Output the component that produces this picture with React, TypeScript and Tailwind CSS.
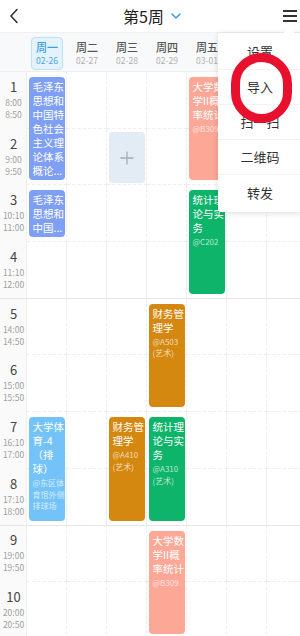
import React from 'react';

type Course = {
  col: number;
  row: number;
  span: number;
  color: string;
  lines: string[];
  loc?: string[];
};

const colStart: Record<number, string> = {
  1: 'col-start-1',
  2: 'col-start-2',
  3: 'col-start-3',
  4: 'col-start-4',
  5: 'col-start-5',
  6: 'col-start-6',
  7: 'col-start-7',
  8: 'col-start-8',
};

const rowStart: Record<number, string> = {
  1: 'row-start-1',
  2: 'row-start-2',
  3: 'row-start-3',
  4: 'row-start-4',
  5: 'row-start-5',
  6: 'row-start-6',
  7: 'row-start-7',
  8: 'row-start-8',
  9: 'row-start-9',
  10: 'row-start-10',
};

const rowSpan: Record<number, string> = {
  1: 'row-span-1',
  2: 'row-span-2',
};

const days = [
  { name: '周一', date: '02-26' },
  { name: '周二', date: '02-27' },
  { name: '周三', date: '02-28' },
  { name: '周四', date: '02-29' },
  { name: '周五', date: '03-01' },
  { name: '周六', date: '03-02' },
  { name: '周日', date: '03-03' },
];

const periods = [
  ['8:00', '8:50'],
  ['9:00', '9:50'],
  ['10:10', '11:00'],
  ['11:10', '12:00'],
  ['14:00', '14:50'],
  ['15:00', '15:50'],
  ['16:10', '17:00'],
  ['17:10', '18:00'],
  ['19:00', '19:50'],
  ['20:00', '20:50'],
];

const BLUE = 'bg-[#7f9ff5]';
const SKY = 'bg-[#74c3f8]';
const SALMON = 'bg-[#fda897]';
const GREEN = 'bg-[#0fb46b]';
const ORANGE = 'bg-[#d5880f]';

const courses: Course[] = [
  { col: 2, row: 1, span: 2, color: BLUE, lines: ['毛泽东', '思想和', '中国特', '色社会', '主义理', '论体系', '概论...'] },
  { col: 2, row: 3, span: 1, color: BLUE, lines: ['毛泽东', '思想和', '中国...'] },
  { col: 6, row: 1, span: 2, color: SALMON, lines: ['大学数', '学II概', '率统计'], loc: ['@B309'] },
  { col: 6, row: 3, span: 2, color: GREEN, lines: ['统计理', '论与实', '务'], loc: ['@C202'] },
  { col: 5, row: 5, span: 2, color: ORANGE, lines: ['财务管', '理学'], loc: ['@A503', '(艺术)'] },
  { col: 2, row: 7, span: 2, color: SKY, lines: ['大学体', '育-4', '（排', '球）'], loc: ['@东区体', '育馆外侧', '排球场'] },
  { col: 4, row: 7, span: 2, color: ORANGE, lines: ['财务管', '理学'], loc: ['@A410', '(艺术)'] },
  { col: 5, row: 7, span: 2, color: GREEN, lines: ['统计理', '论与实', '务'], loc: ['@A310', '(艺术)'] },
  { col: 5, row: 9, span: 2, color: SALMON, lines: ['大学数', '学II概', '率统计'], loc: ['@B309'] },
];

const menuItems = ['设置', '导入', '扫一扫', '二维码', '转发'];

const App: React.FC = () => {
  const cells: React.ReactNode[] = [];
  for (let r = 1; r <= 10; r++) {
    const thick = r === 4 || r === 8;
    cells.push(
      <div
        key={`t${r}`}
        className={`${colStart[1]} ${rowStart[r]} bg-[#fafafa] border-r border-[#f0f0f0] ${thick ? 'border-b border-b-[#e6e6e6]' : ''}`}
      />
    );
    for (let c = 2; c <= 8; c++) {
      cells.push(
        <div
          key={`c${r}-${c}`}
          className={`${colStart[c]} ${rowStart[r]} border-r border-dashed border-r-[#eceef1] ${
            thick ? 'border-b border-solid border-b-[#e6e6e6]' : 'border-b border-dashed border-b-[#eceef1]'
          }`}
        />
      );
    }
  }

  return (
    <div
      className="relative w-[300px] h-[636px] overflow-hidden bg-white"
      style={{ fontFamily: '"Noto Sans CJK SC", "Noto Sans", sans-serif' }}
    >
      {/* header */}
      <div className="h-[33px] flex items-center justify-between px-[9px] border-b border-[#f0f0f0]">
        <svg width="10" height="16" viewBox="0 0 10 16">
          <path d="M8 1.5 L2 8 L8 14.5" fill="none" stroke="#333" strokeWidth="1.6" strokeLinecap="round" strokeLinejoin="round" />
        </svg>
        <div className="flex items-center gap-[7px] ml-[104px]">
          <span className="text-[16px] leading-none text-[#222]">第5周</span>
          <svg width="10" height="6" viewBox="0 0 10 6">
            <path d="M1 1 L5 5 L9 1" fill="none" stroke="#3a9fe6" strokeWidth="1.6" strokeLinecap="round" strokeLinejoin="round" />
          </svg>
        </div>
        <div className="ml-auto mr-[-6px] flex flex-col gap-[3.5px] w-[14px]">
          <div className="h-[1.5px] bg-[#333]" />
          <div className="h-[1.5px] bg-[#333]" />
          <div className="h-[1.5px] bg-[#333]" />
        </div>
      </div>

      {/* dates */}
      <div className="h-[39px] bg-[#f8f9fa] border-b border-[#efefef] grid grid-cols-[27px_repeat(7,40px)]">
        <div />
        {days.map((d, i) => (
          <div key={d.name} className="flex items-center justify-center pt-[2px]">
            <div
              className={`w-[32px] h-[33px] rounded-[4px] flex flex-col items-center justify-center ${
                i === 0 ? 'bg-[#e4f2fc] border border-[#bde0f6]' : ''
              }`}
            >
              <span className={`text-[11px] leading-[14px] font-medium ${i === 0 ? 'text-[#3c9fe2]' : 'text-[#555]'}`}>{d.name}</span>
              <span className={`text-[8.5px] leading-[13px] ${i === 0 ? 'text-[#4ba6e4]' : 'text-[#b0b0b0]'}`}>{d.date}</span>
            </div>
          </div>
        ))}
      </div>

      {/* timetable */}
      <div className="grid grid-cols-[27px_repeat(7,40px)] grid-rows-[repeat(10,56.7px)]">
        {cells}
        {periods.map((p, i) => (
          <div
            key={`l${i}`}
            className={`${colStart[1]} ${rowStart[i + 1]} flex flex-col items-center justify-center pb-[2px]`}
          >
            <span className="text-[13px] leading-[16px] text-[#444]">{i + 1}</span>
            <span className="text-[8.5px] leading-[12px] text-[#a0a0a0] mt-[1px]">{p[0]}</span>
            <span className="text-[8.5px] leading-[12px] text-[#a0a0a0]">{p[1]}</span>
          </div>
        ))}
        <div className={`${colStart[4]} ${rowStart[2]} mx-[2px] mt-[3px] mb-[2px] rounded-[4px] bg-[#e3ebf4] flex items-center justify-center`}>
          <svg width="14" height="14" viewBox="0 0 14 14">
            <path d="M7 0.5 V13.5 M0.5 7 H13.5" stroke="#a3adb8" strokeWidth="1.3" />
          </svg>
        </div>
        {courses.map((c, i) => (
          <div
            key={`k${i}`}
            className={`${colStart[c.col]} ${rowStart[c.row]} ${rowSpan[c.span]} ${c.color} mx-[2px] my-[5px] rounded-[4px] pl-[3.5px] pt-[3px] overflow-hidden text-white`}
          >
            {c.lines.map((l, j) => (
              <div key={j} className="text-[10.5px] leading-[14px] whitespace-nowrap">
                {l}
              </div>
            ))}
            {c.loc && (
              <div className="mt-[1px]">
                {c.loc.map((l, j) => (
                  <div key={j} className="text-[8px] leading-[11.5px] whitespace-nowrap text-white/70">
                    {l}
                  </div>
                ))}
              </div>
            )}
          </div>
        ))}
      </div>

      {/* dropdown menu */}
      <div className="absolute left-[218px] top-[33px] w-[84px] bg-white rounded-[3px] shadow-[0_1px_6px_rgba(0,0,0,0.15)] py-[2px]">
        <div className="absolute -top-[4px] right-[9px] w-[8px] h-[8px] bg-white rotate-45" />
        {menuItems.map((m, i) => (
          <div
            key={m}
            className={`relative h-[35px] flex items-center justify-center text-[13px] text-[#333] ${
              i < menuItems.length - 1 ? 'border-b border-[#f2f2f2]' : ''
            }`}
          >
            {m}
          </div>
        ))}
      </div>

      {/* red highlight ring */}
      <div className="absolute left-[231px] top-[53px] w-[61px] h-[70px] rounded-full border-[9px] border-[#e8112d]" />
    </div>
  );
};

export default App;
